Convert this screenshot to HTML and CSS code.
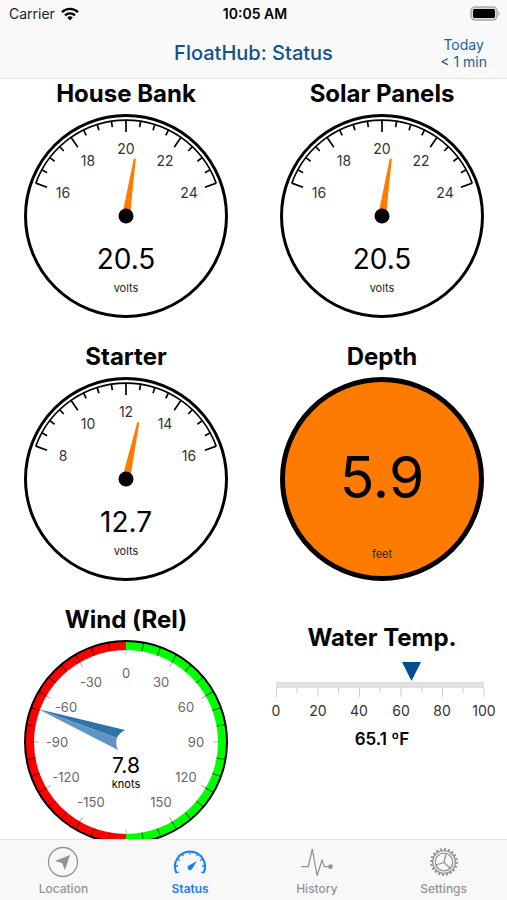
FILE: index.html
```html
<!DOCTYPE html>
<html lang="en">
<head>
    <meta charset="UTF-8">
    <title>FloatHub: Status</title>
    <meta name="viewport" content="width=device-width, initial-scale=1">
    <link rel="stylesheet" href="styles.css">
</head>
<body>

<!-- shared gauge parts -->
<svg class="defs" aria-hidden="true">
  <defs>
    <path id="major" d="M0 -96V-84"/>
    <path id="minor" d="M0 -96V-90"/>
    <g id="minors">
      <use href="#minor" transform="rotate(8.75)"/>
      <use href="#minor" transform="rotate(17.5)"/>
      <use href="#minor" transform="rotate(26.25)"/>
    </g>
    <g id="dial">
      <circle class="rim" r="100.5"/>
      <g class="scale">
        <path d="M-90.2 -32.8A96 96 0 0 1 90.2 -32.8"/>
        <use href="#major" transform="rotate(-70)"/>
        <use href="#minors" transform="rotate(-70)"/>
        <use href="#major" transform="rotate(-35)"/>
        <use href="#minors" transform="rotate(-35)"/>
        <use href="#major"/>
        <use href="#minors"/>
        <use href="#major" transform="rotate(35)"/>
        <use href="#minors" transform="rotate(35)"/>
        <use href="#major" transform="rotate(70)"/>
      </g>
    </g>
    <path id="needle" d="M-1 -58H1L4 0H-4Z"/>
    <path id="windTick" d="M0 -101V-92"/>
    <path id="windMark" d="M0 -92V-87"/>
    <g id="windStep">
      <use href="#windMark" class="mark"/>
      <use href="#windTick" class="tick" transform="rotate(10)"/>
      <use href="#windTick" class="tick" transform="rotate(20)"/>
    </g>
    <g id="windQuarter">
      <use href="#windStep"/>
      <use href="#windStep" transform="rotate(30)"/>
      <use href="#windTick" class="tick" transform="rotate(30)"/>
      <use href="#windStep" transform="rotate(60)"/>
      <use href="#windTick" class="tick" transform="rotate(60)"/>
    </g>
  </defs>
</svg>

<header>
  <div class="statusbar">
    <div class="carrier">
      <span>Carrier</span>
      <svg width="18" height="14" viewBox="0 0 18 14" aria-hidden="true">
        <g fill="none" stroke="#000" stroke-width="2.4">
          <path d="M1 5.2A11.4 11.4 0 0 1 17 5.2"/>
          <path d="M4 8.4A7.1 7.1 0 0 1 14 8.4"/>
        </g>
        <path d="M9 13.5L6.2 10.6A4 4 0 0 1 11.8 10.6Z"/>
      </svg>
    </div>
    <div class="clock">10:05 AM</div>
    <svg class="battery" width="31" height="15" viewBox="0 0 31 15" aria-hidden="true">
      <rect x="1" y="1" width="26" height="13" rx="4" fill="#ddd" stroke="#aaa" stroke-width="1.5"/>
      <rect x="3" y="3" width="22" height="9" rx="1.5"/>
      <path d="M28.5 5Q31 7.5 28.5 10Z" fill="#aaa"/>
    </svg>
  </div>
  <nav class="navbar">
    <h1>FloatHub: Status</h1>
    <button class="updated">Today<br>&lt; 1 min</button>
  </nav>
</header>

<main>
  <section class="card">
    <h2>House Bank</h2>
    <svg class="gauge" viewBox="-102 -102 204 204">
      <use href="#dial"/>
      <g class="labels">
        <text x="-63" y="-18">16</text>
        <text x="-38" y="-50">18</text>
        <text x="0" y="-62">20</text>
        <text x="39" y="-50">22</text>
        <text x="63" y="-18">24</text>
      </g>
      <use href="#needle" class="needle" transform="rotate(8.75)"/>
      <circle r="7.5"/>
      <text class="value" y="53">20.5</text>
      <text class="unit" y="76">volts</text>
    </svg>
  </section>

  <section class="card">
    <h2>Solar Panels</h2>
    <svg class="gauge" viewBox="-102 -102 204 204">
      <use href="#dial"/>
      <g class="labels">
        <text x="-63" y="-18">16</text>
        <text x="-38" y="-50">18</text>
        <text x="0" y="-62">20</text>
        <text x="39" y="-50">22</text>
        <text x="63" y="-18">24</text>
      </g>
      <use href="#needle" class="needle" transform="rotate(8.75)"/>
      <circle r="7.5"/>
      <text class="value" y="53">20.5</text>
      <text class="unit" y="76">volts</text>
    </svg>
  </section>

  <section class="card">
    <h2>Starter</h2>
    <svg class="gauge" viewBox="-102 -102 204 204">
      <use href="#dial"/>
      <g class="labels">
        <text x="-63" y="-18">8</text>
        <text x="-38" y="-50">10</text>
        <text x="0" y="-62">12</text>
        <text x="39" y="-50">14</text>
        <text x="63" y="-18">16</text>
      </g>
      <use href="#needle" class="needle" transform="rotate(12.25)"/>
      <circle r="7.5"/>
      <text class="value" y="53">12.7</text>
      <text class="unit" y="76">volts</text>
    </svg>
  </section>

  <section class="card">
    <h2>Depth</h2>
    <svg class="gauge" viewBox="-102 -102 204 204">
      <circle class="depth" r="99.5"/>
      <text class="big" y="19">5.9</text>
      <text class="unit" y="79">feet</text>
    </svg>
  </section>

  <section class="card">
    <h2>Wind (Rel)</h2>
    <svg class="gauge" viewBox="-102 -102 204 204">
      <path class="port" d="M0 -96.5A96.5 96.5 0 0 0 0 96.5"/>
      <path class="starboard" d="M0 -96.5A96.5 96.5 0 0 1 0 96.5"/>
      <circle class="windrim" r="101"/>
      <use href="#windQuarter"/>
      <use href="#windQuarter" transform="rotate(90)"/>
      <use href="#windQuarter" transform="rotate(180)"/>
      <use href="#windQuarter" transform="rotate(270)"/>
      <g class="labels small">
        <text x="0" y="-64">0</text>
        <text x="35" y="-55">30</text>
        <text x="60" y="-30">60</text>
        <text x="70" y="5">90</text>
        <text x="60" y="40">120</text>
        <text x="35" y="65">150</text>
        <text x="-35" y="-55">-30</text>
        <text x="-60" y="-30">-60</text>
        <text x="-69" y="5">-90</text>
        <text x="-60" y="40">-120</text>
        <text x="-35" y="65">-150</text>
      </g>
      <path d="M-88 -33L-1 -12Q-7 -9 -9 -4Z" fill="#2f73a8"/>
      <path d="M-88 -33L-9 -4Q-11 1 -8 8Z" fill="#5f95c4"/>
      <text class="speed" y="31">7.8</text>
      <text class="unit dark" y="46">knots</text>
    </svg>
  </section>

  <section class="card water">
    <h2>Water Temp.</h2>
    <svg class="linear" viewBox="0 0 204 64">
      <rect x="-4" y="24" width="208" height="6" fill="#dfe0df"/>
      <path class="marks" d="M-3.5 30v9M38 30v9M79.5 30v9M121 30v9M162.5 30v9M204 30v9M17 30v5M58.5 30v5M100 30v5M142 30v5M183 30v5"/>
      <path d="M122 4H141L131.5 23Z" fill="#00508f"/>
      <g class="labels">
        <text x="-4" y="58">0</text>
        <text x="38" y="58">20</text>
        <text x="79" y="58">40</text>
        <text x="121" y="58">60</text>
        <text x="162" y="58">80</text>
        <text x="204" y="58">100</text>
      </g>
    </svg>
    <p class="temp">65.1 ºF</p>
  </section>
</main>

<nav class="tabs">
  <a href="#location">
    <svg viewBox="-16 -16 32 32" aria-hidden="true">
      <circle r="14.5" class="line"/>
      <path d="M7 -7L-8 -1L-1 1L2 8Z" class="solid"/>
    </svg>
    Location
  </a>
  <a href="#status" class="active">
    <svg viewBox="-16 -16 32 32" aria-hidden="true">
      <path class="line thick" d="M-13.5 11A15 15 0 1 1 13.5 11"/>
      <path class="line" d="M-15 4h3M15 4h-3M-13 -3l3 1.5M13 -3l-3 1.5M-8 -8.5l1.5 2.5M8 -8.5l-1.5 2.5M0 -10.5v3M-14 11l3 -1M14 11l-3 -1"/>
      <path class="solid" d="M7 -1L2.5 6.2A2.5 2.5 0 1 1 -0.8 3.2Z"/>
    </svg>
    Status
  </a>
  <a href="#history">
    <svg viewBox="-16 -16 32 32" aria-hidden="true">
      <path class="line" d="M-16 4.7H-8.7L-4.7 -13L0 13.5L5 -1.7L7.3 4.7H13"/>
      <circle cx="13.5" cy="4.7" r="2.4" class="solid"/>
    </svg>
    History
  </a>
  <a href="#settings">
    <svg viewBox="-16 -16 32 32" aria-hidden="true">
      <circle r="12.7" class="teeth" pathLength="40"/>
      <circle r="11.3" class="line"/>
      <circle r="8.8" class="line"/>
      <path class="line" d="M0 0.5L2 -8.5M0 0.5L-8.5 3M0 0.5L6.5 6.5"/>
    </svg>
    Settings
  </a>
</nav>

</body>
</html>
```
FILE: styles.css
```css
* {
  box-sizing: border-box;
}

body {
  margin: 0;
  height: 100vh;
  display: flex;
  flex-direction: column;
  background: #fff;
  color: #000;
  font-family: Inter, "Liberation Sans", sans-serif;
}

h1, h2, p {
  margin: 0;
}

.defs {
  position: absolute;
  width: 0;
  height: 0;
}

/* top bars */
header {
  background: #f9f9f9;
  border-bottom: 1px solid #e2e2e2;
}

.statusbar, .navbar {
  display: grid;
  grid-template-columns: 1fr auto 1fr;
  align-items: center;
}

.statusbar {
  height: 27px;
  padding: 0 6px 0 9px;
  font-size: 14px;
}

.carrier {
  display: flex;
  align-items: center;
  gap: 6px;
  color: #222;
}

.clock {
  font-weight: 600;
}

.battery {
  justify-self: end;
}

.navbar {
  height: 51px;
  padding: 0 20px;
}

.navbar h1 {
  grid-column: 2;
  font-size: 20px;
  font-weight: 500;
  color: #0f5291;
}

.updated {
  justify-self: end;
  padding: 0;
  border: none;
  background: none;
  font: 14px/17px Inter, "Liberation Sans", sans-serif;
  color: #1d5f9c;
  text-align: center;
}

/* gauges */
main {
  flex: 1;
  min-height: 0;
  overflow-y: auto;
  scrollbar-width: none;
  display: grid;
  grid-template-columns: 1fr 1fr;
  align-content: start;
  gap: 24px 52px;
  padding: 0 23px 24px 24px;
}

.card {
  display: flex;
  flex-direction: column;
  gap: 5px;
  text-align: center;
}

.card h2 {
  font-size: 24px;
  line-height: 30px;
  font-weight: 700;
  white-space: nowrap;
}

.gauge, .linear {
  display: block;
  width: 100%;
  overflow: visible;
}

.gauge text, .linear text {
  text-anchor: middle;
}

.rim {
  fill: #fff;
  stroke: #000;
  stroke-width: 3;
}

.scale {
  fill: none;
  stroke: #000;
  stroke-width: 1.7;
}

.labels {
  font-size: 14px;
  fill: #333;
}

.labels.small {
  font-size: 13px;
  fill: #666;
}

.needle {
  fill: #ff7b00;
}

.value {
  font-size: 28px;
}

.unit {
  font-size: 11px;
  fill: #222;
}

.unit.dark {
  fill: #000;
}

.big {
  font-size: 57px;
}

.speed {
  font-size: 21px;
}

.depth {
  fill: #ff7b00;
  stroke: #000;
  stroke-width: 5;
}

.port, .starboard {
  fill: none;
  stroke-width: 9;
}

.port {
  stroke: #f00;
}

.starboard {
  stroke: #0f0;
}

.windrim {
  fill: none;
  stroke: #000;
  stroke-width: 2;
}

.tick {
  stroke: rgba(0, 0, 0, 0.6);
}

.mark {
  stroke: rgba(0, 0, 0, 0.3);
}

/* water temperature */
.water {
  padding-top: 18px;
}

.marks {
  stroke: #ccc;
  stroke-width: 1;
}

.temp {
  font-size: 17px;
  line-height: 20px;
  font-weight: 600;
  margin-top: 2px;
}

/* bottom tabs */
.tabs {
  display: grid;
  grid-template-columns: repeat(4, 1fr);
  height: 61px;
  background: #f8f8f8;
  border-top: 1px solid #e2e2e2;
}

.tabs a {
  display: flex;
  flex-direction: column;
  align-items: center;
  padding-top: 6px;
  gap: 3px;
  font-size: 12px;
  line-height: 16px;
  font-weight: 500;
  color: #949494;
  text-decoration: none;
}

.tabs a.active {
  color: #177efb;
  font-weight: 600;
}

.tabs svg {
  width: 32px;
  height: 32px;
  overflow: visible;
}

.line, .teeth {
  fill: none;
  stroke: currentColor;
  stroke-width: 1.3;
}

.line.thick {
  stroke-width: 2;
}

.teeth {
  stroke-width: 2.4;
  stroke-dasharray: 1 1;
}

.solid {
  fill: currentColor;
}
```
